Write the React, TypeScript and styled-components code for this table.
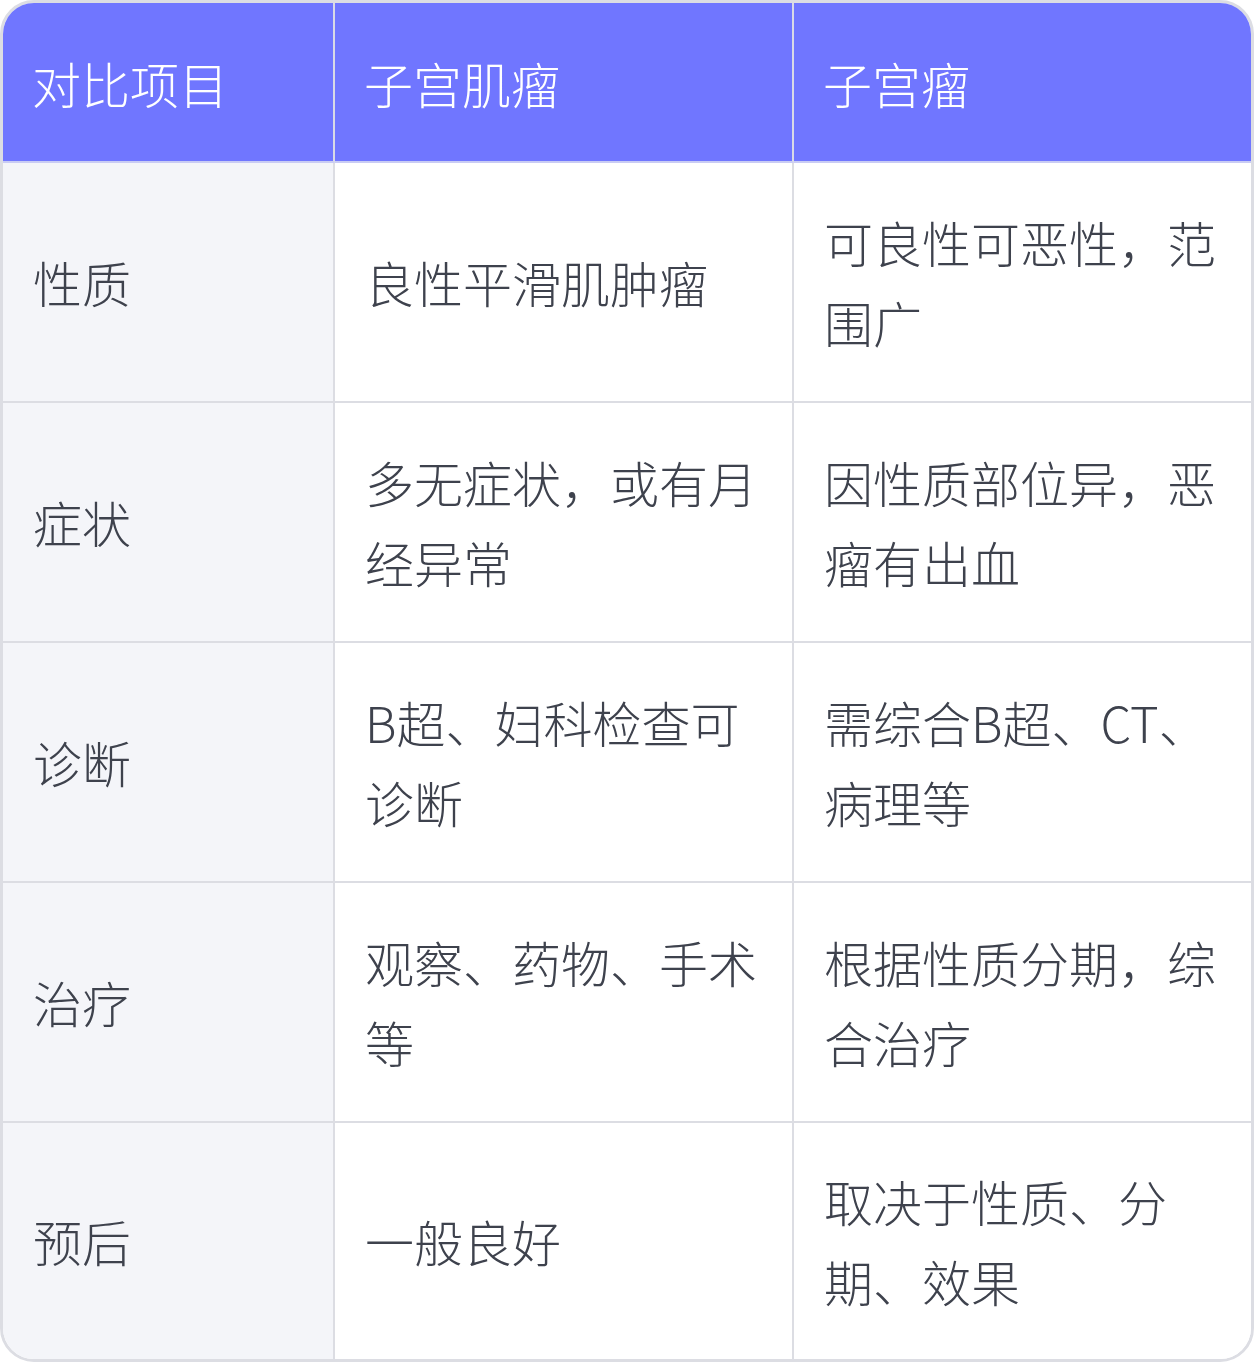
import React from 'react'
import styled, { createGlobalStyle } from 'styled-components'

const GlobalStyle = createGlobalStyle`
  body {
    margin: 0;
    background: #ffffff;
    font-family: 'Noto Sans CJK SC', 'Noto Sans', sans-serif;
  }
`

const Table = styled.div`
  width: 1254px;
  box-sizing: border-box;
  border: 3px solid #dcdde3;
  border-radius: 34px;
  overflow: hidden;
  display: grid;
  grid-template-columns: 332px 459px 1fr;
`

const HeadCell = styled.div<{ $last?: boolean }>`
  height: 160px;
  box-sizing: border-box;
  display: flex;
  align-items: center;
  padding: 0 29px;
  background: #7076ff;
  color: #ffffff;
  font-size: 49px;
  font-weight: 300;
  border-right: ${(p) => (p.$last ? 'none' : '2px solid #d9dae6')};
  border-bottom: 2px solid #c9ccf4;
`

const Cell = styled.div<{ $label?: boolean; $last?: boolean; $bottom?: boolean }>`
  height: ${(p) => (p.$bottom ? '236px' : '240px')};
  box-sizing: border-box;
  display: flex;
  align-items: center;
  padding: 0 29px 0 30px;
  background: ${(p) => (p.$label ? '#f4f5f9' : '#ffffff')};
  color: #3e424d;
  font-size: 49px;
  font-weight: 300;
  line-height: 80px;
  border-right: ${(p) => (p.$last ? 'none' : '2px solid #dcdde3')};
  border-bottom: ${(p) => (p.$bottom ? 'none' : '2px solid #dcdde3')};
`

const rows = [
  ['性质', '良性平滑肌肿瘤', '可良性可恶性，范围广'],
  ['症状', '多无症状，或有月经异常', '因性质部位异，恶瘤有出血'],
  ['诊断', 'B超、妇科检查可诊断', '需综合B超、CT、病理等'],
  ['治疗', '观察、药物、手术等', '根据性质分期，综合治疗'],
  ['预后', '一般良好', '取决于性质、分期、效果'],
]

const App: React.FC = () => {
  return (
    <>
      <GlobalStyle />
      <Table>
        <HeadCell>对比项目</HeadCell>
        <HeadCell>子宫肌瘤</HeadCell>
        <HeadCell $last>子宫瘤</HeadCell>
        {rows.map((row, i) => {
          const bottom = i === rows.length - 1
          return (
            <React.Fragment key={row[0]}>
              <Cell $label $bottom={bottom}>{row[0]}</Cell>
              <Cell $bottom={bottom}>{row[1]}</Cell>
              <Cell $last $bottom={bottom}>{row[2]}</Cell>
            </React.Fragment>
          )
        })}
      </Table>
    </>
  )
}

export default App
